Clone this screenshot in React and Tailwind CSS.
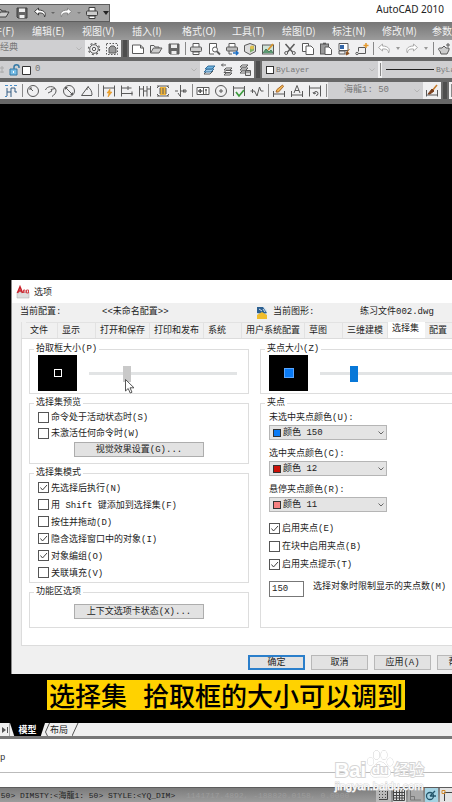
import React, { useState } from 'react';
import clsx from 'clsx';

const MENUS = ['文件(F)', '编辑(E)', '视图(V)', '插入(I)', '格式(O)', '工具(T)', '绘图(D)', '标注(N)', '修改(M)', '参数(P)'];

const TABS = [
  { label: '文件', width: 'w-8' },
  { label: '显示', width: 'w-[38px]' },
  { label: '打开和保存', width: 'w-[54px]' },
  { label: '打印和发布', width: 'w-[54px]' },
  { label: '系统', width: 'w-[38px]' },
  { label: '用户系统配置', width: 'w-[63px]' },
  { label: '草图', width: 'w-[38px]' },
  { label: '三维建模', width: 'w-[45px]' },
  { label: '选择集', width: 'w-[37px]' },
  { label: '配置', width: 'w-[38px]' },
];

const SELECTION_MODES = [
  { label: '先选择后执行(N)', checked: true },
  { label: '用 Shift 键添加到选择集(F)', checked: false },
  { label: '按住并拖动(D)', checked: false },
  { label: '隐含选择窗口中的对象(I)', checked: true },
  { label: '对象编组(O)', checked: true },
  { label: '关联填充(V)', checked: false },
];

const GRIP_COLORS = [
  { id: 'grip-unselected', label: '未选中夹点颜色(U):', value: '颜色 150', swatch: 'bg-[#0a7bf5]' },
  { id: 'grip-selected', label: '选中夹点颜色(C):', value: '颜色 12', swatch: 'bg-[#cc1108]' },
  { id: 'grip-hover', label: '悬停夹点颜色(R):', value: '颜色 11', swatch: 'bg-[#f58080]' },
];

// Toolbar glyphs, all on a 14x14 grid
const GLYPHS = {
  open: <><path d="M1.5 11V3.5h3.5l1 1.5h4V6" /><path d="M1.5 11 4.5 6h8.5l-3 5z" fill="#ccc" /></>,
  save: <><path d="M2 2h10v10H3l-1-1z" fill="#666" /><path d="M4 2.5h6V6H4zM4.5 9h5v3h-5z" fill="#eee" stroke="none" /></>,
  undo: <path d="M5.500 2 1.500 5.500l4 3.500V7c4-.3 6 .8 6 4 2-3 .5-7-6-7z" fill="#fff" />,
  redo: <path d="m8.500 2 4 3.500-4 3.500V7c-4-.3-6 .8-6 4-2-3-.5-7 6-7z" fill="#fff" />,
  print: <><path d="M4 5V1.500h6V5M4 9v3.500h6V9" fill="#fff" /><rect x="1.500" y="5" width="11" height="4.500" rx="1" fill="#ccc" /><path d="M4 10h6" /></>,
  gear: <><circle cx="7" cy="7" r="4.300" strokeWidth="1" /><circle cx="7" cy="7" r="1.700" /><circle cx="7" cy="7" r="5.600" strokeDasharray="2 2.400" strokeWidth="1.200" /></>,
  frame: <><rect x="1.500" y="1.500" width="11" height="11" strokeDasharray="1.500 1.500" /><path d="M4 11V6l2-2h3l2 2v5z" fill="#9a9a9a" /></>,
  page: <path d="M1.500 3h8L12.500 6v5.500h-11zM9.500 3v3h3" fill="#fff" />,
  preview: <><path d="M7 12H2.500V1.500h7V5" fill="#fff" /><circle cx="8" cy="7.500" r="2.500" /><path d="m10 9.500 3 3" strokeWidth="1.800" /></>,
  plot: <><path d="M4 5V1.500h6V5" fill="#fff" /><rect x="1.500" y="5" width="11" height="4" rx="1" fill="#bbb" /><path d="M4 9v3h3" /><path d="M8 11h5M11 9l2 2-2 2" stroke="#1d6fc4" strokeWidth="1.500" /></>,
  cube: <><path d="m7 1.500 5.500 2v6L7 12.500 1.500 9.500v-6z" fill="#ddd" /><path d="m7 5 4-1.500v5L7 10.500z" fill="#7fb069" stroke="none" /><circle cx="9" cy="5.500" r="2" fill="#e3c04d" stroke="none" /></>,
  picture: <><rect x="1.500" y="3" width="11" height="9" fill="#cfe3d8" /><path d="m2 11 3-4 3 3 2-2 2 3" fill="#5b9a72" stroke="#4a7d5d" /><path d="m7 8 5-6" stroke="#d8952c" strokeWidth="1.800" /></>,
  cut: <><path d="m2.500 2 7 8M11.500 2l-7 8" strokeWidth="1.500" /><circle cx="3.200" cy="11" r="1.500" /><circle cx="10.800" cy="11" r="1.500" /></>,
  copy: <><path d="M1.500 1.500h6v8h-6z" fill="#fff" /><path d="M5 4h5l2.500 2.500v6H5z" fill="#fff" /></>,
  paste: <><rect x="1.500" y="2" width="8" height="10" fill="#999" /><path d="M4 1.500h3" strokeWidth="1.600" /><path d="M6 5h4l2.500 2.500v5H6z" fill="#fff" /></>,
  match: <><path d="M2 1.500h9v7H2z" fill="#fff" /><path d="M3 3h4v4H3z" fill="#3567a8" stroke="none" /><path d="M2 9h6v3H2z" /><path d="m12.500 7-3 4" stroke="#c27a2a" /><path d="m10 9.500 2 2-3 1.500z" fill="#8b4f1d" stroke="#8b4f1d" /></>,
  block: <><path d="M3.500 5.500h7v6h-9M3.500 5.500v4" /><circle cx="2" cy="11.500" r="1.200" fill="#fff" /><path d="M11 1v5M8.500 3.500h5" stroke="#e5982b" strokeWidth="1.500" /></>,
  pan: <><path d="M3 6c-2 0-2 2 0 3l1 3h6l2-4V6H9L7 4 5 6z" fill="#ccc" /><path d="M11 1v4M9 3h4" /></>,
  layers: <><path d="m2 11 3-3h6l-3 3z" fill="#fff" /><path d="m2 9 3-3h7L9 9z" fill="#9ecae8" stroke="#356f9c" /><path d="m3 6 3-3h7l-3 3z" fill="#6fb4df" stroke="#356f9c" /></>,
  layerPrev: <><path d="m4 12 2-2h6l-2 2zM4 9.500l2-2h6l-2 2zM4 7l2-2h6l-2 2z" fill="#fff" /><path d="M6 2H1.500M3 .5 1.500 2 3 3.500" /></>,
  layerState: <><path d="m2 10 2-2h6l-2 2zM2 7l2-2h6l-2 2zM2 4l2-2h6L8 4z" fill="#fff" /><path d="M7.500 7.500h5v5h-5z" fill="#ddd" /><path d="M7.500 9h5" /></>,
  quickDim: <><path d="M3 4v8M3 8h4V4h4v4h2M7 8v5" stroke="#355d82" /><path d="M1 1.500h3M6 1.500h2M10 1.500h3M1 12.500h2" stroke="#4b8fc9" /></>,
  radius: <><circle cx="7" cy="7" r="5.500" /><path d="m7 7-3-3M4 6V4h2" /></>,
  jogged: <path d="M1.500 6c1-4 9-5 10.500 0 .5 3-2 5-4 6.500M4 9l4-2-1-1.500 4-1" />,
  diameter: <><circle cx="7" cy="7" r="5.500" /><path d="m3 3 8 8M3.500 5.500v-2h2M10.500 8.500v2h-2" /></>,
  angle: <path d="M12 11.500H1.500L8.500 2M8 3c3 2 4 5 4 8M6 5l2 0" />,
  quick: <><path d="M1.500 1.500v11M12.500 1.500v11M1.500 4h11" /><path d="M8 5 5 9h2l-1 4 4-5H8z" fill="#f1a62b" stroke="#e08b12" strokeWidth=".5" /></>,
  baseline: <path d="M1.500 1.500v11M1.500 4h10M8 2v4M1.500 9.500h11M12 7.500v4" />,
  continued: <path d="M1.500 2v10.500M5.500 2v10.500M9 2v10.500M12.500 2v10.500M1.500 5h4M9 5h3.500M5.500 7H9" />,
  space: <><path d="M4 3h6v8H4z" fill="#f1b53a" stroke="none" /><path d="M1 2h12M1 12h12M4 4v6M7 4v6M10 4v6M1 4l2-2M13 4l-2-2M1 10l2 2M13 10l-2 2" /></>,
  breakDim: <path d="M1 7h3M6 7h7M6.500 1v12M9.500 5.500v3M11 5v4M4 9l2 3" />,
  tolerance: <><path d="M1 3.500h12v7H1zM7.500 3.500v7" fill="#fff" /><path d="M2 7h4.500M4.200 5v4M10 5v2.500M10 8.500v1" strokeWidth="1.600" /></>,
  center: <><circle cx="7" cy="7" r="5.500" /><path d="M7 5v4M5 7h4" /></>,
  inspect: <><path d="M1.500 2v10M12.500 2v10M1.500 4h11" /><path d="m4 8 3 4 5-6" stroke="#3d9c3d" strokeWidth="1.700" /></>,
  jogLine: <path d="M.5 7h4l2.500 5L9.500 3l1.500 4h2.500M2.500 5v4" />,
  dimEdit: <><path d="M1.500 7v6M12.500 7v6M1.500 10h11" /><path d="m4 8 1-2.500L10.500 1l1 1.500L6.500 8z" fill="#f3b956" stroke="#a8672a" /></>,
  textEdit: <path d="M1.500 7v6M12.500 7v6M1.500 11h11M4 9l3-7.500L10 9M5 6.500h4" />,
  update: <><path d="M1.500 1.500v11M12.500 1.500v11M1.500 4h11" /><path d="M6 9.500a2 2 0 1 1 2 2M5 8l1 2 2-1" /></>,
  styleBrush: <><path d="M1.500 6v6.500M12.500 6v6.500M1.500 11h11" /><path d="m12 1-5 6" stroke="#c4792a" strokeWidth="1.500" /><path d="m7 5 2 2-4 3H3z" fill="#7b3f1c" stroke="#7b3f1c" /></>,
};

function Glyph({ name, className }) {
  return (
    <svg viewBox="0 0 14 14" className={clsx('size-3.5 shrink-0', className)} fill="none" stroke="currentColor" strokeWidth="1" aria-hidden="true">
      {GLYPHS[name]}
    </svg>
  );
}

function Tool({ name, faded }) {
  return (
    <button type="button" aria-label={name} className={clsx('flex w-[18px] shrink-0 items-center justify-center', faded ? 'text-[#aaaaaa]' : 'text-[#5a5a5a]')}>
      <Glyph name={name} />
    </button>
  );
}

const Tools = ({ names }) => names.map((n) => <Tool key={n} name={n} />);
const Sep = () => <span className="my-0.5 ml-0.5 w-0.5 shrink-0 border-l border-[#888888]" />;
const Grip = () => <span className="w-2 shrink-0 border-x-2 border-[#6c6c6c] bg-[#4e4e4e]" />;
const Caret = () => (
  <span className="flex w-2.5 shrink-0 items-center justify-center">
    <span className="border-x-2 border-t-3 border-x-transparent border-t-[#999999]" />
  </span>
);

function Chevron({ className }) {
  return (
    <svg viewBox="0 0 8 6" className={clsx('h-1.5 w-2', className)} fill="none" stroke="currentColor" aria-hidden="true">
      <path d="m1.500 1.500 2.500 2.500 2.500-2.500" />
    </svg>
  );
}

function Combo({ label, value, className, selectClass, children }) {
  return (
    <div className={clsx('relative flex items-center bg-[#cfcfd1] text-[#777777]', className)}>
      {children}
      <select aria-label={label} className={clsx('h-full min-w-0 flex-1 appearance-none bg-transparent pt-px', selectClass)}>
        <option>{value}</option>
      </select>
      <Chevron className="pointer-events-none absolute right-0.5 text-[#b4b4b4]" />
    </div>
  );
}

function Toolbars() {
  return (
    <div className="flex flex-col gap-1 bg-[#676767] pb-[5px] font-['Liberation_Mono','Noto_Sans_CJK_SC',monospace]">
      <div className="flex h-[17px] bg-[#f0f0f1]">
        <Combo label="工作空间" value="经典" className="w-[85px] shrink-0" selectClass="text-[9px]" />
        <Tools names={['gear', 'frame']} />
        <Grip />
        <Tools names={['page', 'open', 'save']} />
        <Sep />
        <Tools names={['print', 'preview', 'plot', 'cube', 'picture']} />
        <Sep />
        <Tools names={['cut', 'copy', 'paste', 'match', 'block']} />
        <Sep />
        <Tool name="undo" faded />
        <Caret />
        <Tool name="redo" faded />
        <Caret />
        <Sep />
        <Tool name="pan" />
      </div>
      <div className="flex h-[17px] bg-[#f0f0f1]">
        <Combo label="图层" value="0" className="w-[200px] shrink-0" selectClass="pl-1 text-[9px]">
          <svg viewBox="0 0 31 14" className="h-3.5 w-[31px] shrink-0" fill="none" aria-hidden="true">
            <path d="M0 5h4M2 3v7M0 9h4" stroke="#aaaaaa" />
            <path d="M10 6h7v6h-7z" fill="#78bde6" stroke="#3579a5" />
            <path d="M14 6V4c0-3 5-3 5 0v1" stroke="#3579a5" strokeWidth="1.500" />
            <path d="M13.500 8v2" stroke="#fff" />
            <path d="M22.500 3.500h8v8h-8z" fill="#fff" stroke="#333333" />
          </svg>
        </Combo>
        <Tools names={['layers', 'layerPrev', 'layerState']} />
        <Grip />
        <Combo label="颜色控制" value="ByLayer" className="w-[116px] shrink-0" selectClass="pl-0.5 text-[8px]">
          <span className="ml-1 size-2 border border-[#333333] bg-white" />
        </Combo>
        <Sep />
        <Combo label="线型控制" value="ByLayer" className="min-w-0 flex-1" selectClass="pl-0.5 text-[8px]">
          <span className="ml-1 w-12 shrink-0 border-t border-[#222222]" />
        </Combo>
      </div>
      <div className="flex h-[17px] bg-[#f0f0f1] pl-0.5">
        <Tool name="quickDim" />
        <Sep />
        <Tools names={['radius', 'jogged', 'diameter', 'angle']} />
        <Sep />
        <Tools names={['quick', 'baseline', 'continued', 'space', 'breakDim']} />
        <Sep />
        <Tools names={['tolerance', 'center', 'inspect', 'jogLine']} />
        <Sep />
        <Tools names={['dimEdit', 'textEdit', 'update']} />
        <Sep />
        <Combo label="标注样式" value="海龍1: 50" className="w-[95px] shrink-0" selectClass="pl-4 text-[9px]" />
        <Tool name="styleBrush" />
        <Grip />
        <Sep />
      </div>
    </div>
  );
}

function Group({ title, className, children }) {
  return (
    <fieldset className={clsx('flex min-w-0 flex-col border border-[#dddddd] px-2', className)}>
      <legend className="-ml-1 h-3 px-0.5 leading-3">{title}</legend>
      {children}
    </fieldset>
  );
}

function Check({ label, checked, className }) {
  const [on, setOn] = useState(Boolean(checked));
  return (
    <label className={clsx('flex items-center gap-0.5 whitespace-nowrap', className)}>
      <span className="relative flex size-[11px] shrink-0">
        <input type="checkbox" checked={on} onChange={() => setOn(!on)} className="size-[11px] appearance-none border border-[#555555] bg-white" />
        {on && (
          <svg viewBox="0 0 11 11" className="pointer-events-none absolute inset-0 size-[11px]" fill="none" stroke="#444444" aria-hidden="true">
            <path d="m2.500 5.500 2 2.500 4.500-5" />
          </svg>
        )}
      </span>
      <span className="pt-0.5 leading-3">{label}</span>
    </label>
  );
}

function SizeSlider({ label, value, className, preview }) {
  return (
    <div className="flex items-center gap-3 pb-0.5">
      <div className="flex h-9 w-[39px] shrink-0 items-center justify-center bg-black">{preview}</div>
      <input
        type="range"
        aria-label={label}
        defaultValue={value}
        className={clsx(
          'h-4 min-w-0 flex-1 appearance-none bg-transparent',
          '[&::-webkit-slider-runnable-track]:h-[3px] [&::-webkit-slider-runnable-track]:bg-[#e2e4e5]',
          '[&::-webkit-slider-thumb]:-mt-1.5 [&::-webkit-slider-thumb]:h-4 [&::-webkit-slider-thumb]:w-2 [&::-webkit-slider-thumb]:appearance-none',
          className
        )}
      />
    </div>
  );
}

function ColorField({ id, label, value, swatch }) {
  return (
    <div className="flex flex-col gap-px">
      <label htmlFor={id} className="h-3 leading-3">{label}</label>
      <div className="relative flex h-[15px] w-[118px] items-center">
        <select id={id} className="h-full w-full appearance-none border border-[#b5b5b5] bg-[#e4e4e4] pl-[13px] pt-px leading-3">
          <option>{value}</option>
        </select>
        <span className={clsx('pointer-events-none absolute left-1 size-2 border border-[#333333]', swatch)} />
        <Chevron className="pointer-events-none absolute right-0.5 text-[#666666]" />
      </div>
    </div>
  );
}

function PushButton({ children, className }) {
  return (
    <button type="button" className={clsx('h-[15px] shrink-0 border bg-[#e2e2e2] leading-3', className)}>
      {children}
    </button>
  );
}

function OptionsDialog() {
  const [tab, setTab] = useState('选择集');

  return (
    <section className="ml-[11px] mt-[176px] border-l border-[#8a8a8a] bg-[#f0f0f0] pb-1 font-['Liberation_Mono','Noto_Sans_CJK_SC',monospace] text-[9px] text-[#1c1c1c]">
      <header className="flex h-[23px] items-center gap-1 bg-white pl-1">
        <svg viewBox="0 0 14 14" className="size-3.5" aria-hidden="true">
          <path d="M1 7h12v6H1z" fill="#dedede" stroke="#aaaaaa" strokeWidth=".5" />
          <path d="M1.500 8 4 2l2.500 6M2.500 6h3" fill="none" stroke="#c8232c" strokeWidth="1.700" />
          <path d="M7.500 8V5h1.500v3M10.500 5h2v3h-2z" fill="none" stroke="#d4434a" strokeWidth="1" />
        </svg>
        <h1 className="font-['Noto_Sans_CJK_SC',sans-serif] text-[9px]">选项</h1>
      </header>

      <div className="flex h-[19px] items-center overflow-hidden whitespace-nowrap pl-2">
        <span className="w-[82px] shrink-0">当前配置:</span>
        <span className="w-[154px] shrink-0">&lt;&lt;未命名配置&gt;&gt;</span>
        <svg viewBox="0 0 12 14" className="mr-[5px] h-3.5 w-3 shrink-0" aria-hidden="true">
          <path d="M1 1h7l3 3v9H1z" fill="#d9e6ef" />
          <path d="M1 1h6l4 6-4 1-6-1z" fill="#2b5f91" />
          <path d="m1 9 5-3 5 3v4H1z" fill="#f0bd2c" />
          <path d="m3 3 3 2M7 3l2 3" stroke="#fff" strokeWidth=".8" />
        </svg>
        <span className="w-[87px] shrink-0">当前图形:</span>
        <span>练习文件002.dwg</span>
      </div>

      <nav role="tablist" className="ml-[9px] flex h-4 items-stretch overflow-hidden border-l border-[#e0e0e0] pl-1">
        {TABS.map((t) => (
          <button
            key={t.label}
            type="button"
            role="tab"
            aria-selected={tab === t.label}
            onClick={() => setTab(t.label)}
            className={clsx(
              'shrink-0 whitespace-nowrap pl-1 text-left leading-3',
              t.width,
              tab === t.label ? 'bg-white pb-0.5' : 'border-r border-t border-[#e2e2e2]'
            )}
          >
            {t.label}
          </button>
        ))}
      </nav>

      <div className="ml-[9px] grid grid-cols-[220px_1fr] gap-x-[11px] border-y border-l border-[#dcdcdc] bg-white pb-[17px] pl-[7px] pt-1">
        <div className="flex flex-col gap-[3px]">
          <Group title="拾取框大小(P)">
            <div className="relative">
              <SizeSlider
                label="拾取框大小"
                value={24}
                className="mr-[3px] [&::-webkit-slider-thumb]:bg-[#c9c9c9]"
                preview={<span className="size-2 border border-white" />}
              />
              <svg viewBox="0 0 10 15" className="pointer-events-none absolute left-[87px] top-6 h-[15px] w-2.5" aria-hidden="true">
                <path d="M.5.500v11.500l2.700-2.500 2 4.500 1.800-.8-2-4.400h4z" fill="#fff" stroke="#444444" strokeWidth=".9" />
              </svg>
            </div>
          </Group>
          <Group title="选择集预览" className="pb-1.5">
            <Check label="命令处于活动状态时(S)" className="h-4" />
            <Check label="未激活任何命令时(W)" className="h-4" />
            <PushButton className="mx-9 mt-px border-[#adadad]">视觉效果设置(G)...</PushButton>
          </Group>
          <Group title="选择集模式" className="pb-px">
            {SELECTION_MODES.map((m) => (
              <Check key={m.label} label={m.label} checked={m.checked} className="h-[17px]" />
            ))}
          </Group>
          <Group title="功能区选项" className="pb-2">
            <PushButton className="mx-9 mt-1.5 border-[#adadad]">上下文选项卡状态(X)...</PushButton>
          </Group>
        </div>

        <div className="flex min-w-0 flex-col gap-[3px]">
          <Group title="夹点大小(Z)" className="border-r-0 pr-0">
            <SizeSlider
              label="夹点大小"
              value={24}
              className="[&::-webkit-slider-thumb]:bg-[#0878d8]"
              preview={<span className="size-2.5 border border-[#5aa6ff] bg-[#0a7bf5]" />}
            />
          </Group>
          <Group title="夹点" className="flex-1 border-r-0 pr-0">
            <div className="flex flex-col gap-2 pt-[3px]">
              {GRIP_COLORS.map((c) => (
                <ColorField key={c.id} {...c} />
              ))}
            </div>
            <div className="mt-[7px] flex flex-col">
              <Check label="启用夹点(E)" checked className="h-[18px]" />
              <Check label="在块中启用夹点(B)" className="h-[18px]" />
              <Check label="启用夹点提示(T)" checked className="h-[18px]" />
            </div>
            <div className="mt-2 flex items-start gap-[9px]">
              <input id="grip-limit" defaultValue="150" className="h-4 w-[35px] shrink-0 border border-[#777777] bg-white px-0.5" />
              <label htmlFor="grip-limit" className="whitespace-nowrap leading-3">选择对象时限制显示的夹点数(M)</label>
            </div>
          </Group>
        </div>
      </div>

      <footer className="mt-[9px] flex gap-1.5 overflow-hidden pl-[236px]">
        <PushButton className="w-[57px] border-[#2b7fcb] ring-1 ring-inset ring-[#2b7fcb]">确定</PushButton>
        <PushButton className="w-[57px] border-[#b8b8b8]">取消</PushButton>
        <PushButton className="w-[57px] border-[#b8b8b8]">应用(A)</PushButton>
        <PushButton className="w-[57px] border-[#b8b8b8]">帮助(H)</PushButton>
      </footer>
    </section>
  );
}

function StatusBar() {
  return (
    <footer className="flex h-[15px] items-center overflow-hidden border-t border-[#5c5c5c] bg-linear-to-b from-[#7c7c7c] to-[#9c9c9c] font-['Liberation_Mono','Noto_Sans_CJK_SC',monospace] text-[8px] text-[#1f1f1f]">
      <span className="-ml-1 w-[190px] shrink-0 whitespace-nowrap pt-0.5">:50&gt; DIMSTY:&lt;海龍1: 50&gt; STYLE:&lt;YQ_DIM&gt;</span>
      <span className="min-w-0 flex-1 whitespace-nowrap pt-0.5 text-[#9c9c9c]">1141717.4892, -188820.0158, 0.0000</span>
      <div className="flex w-[76px] shrink-0 gap-0.5 text-[#444444]">
        <button type="button" aria-label="捕捉" className="flex h-3.5 w-4 items-center justify-center bg-[#b9b9b9]">
          <svg viewBox="0 0 12 12" className="size-3" fill="none" stroke="currentColor"><path d="M2 2.500h8M2 5.500h8M2 8.500h8" strokeDasharray="1 2" /><path d="M10.500 2v8.500H2" /></svg>
        </button>
        <button type="button" aria-label="栅格" className="flex h-3.5 w-3.5 items-center justify-center bg-[#dedede]">
          <svg viewBox="0 0 12 12" className="size-3" fill="none" stroke="currentColor"><path d="M.5.500h11v11H.5zM3.500 0v12M6.500 0v12M9 0v12M0 3.500h12M0 6.500h12M0 9h12" /></svg>
        </button>
        <button type="button" aria-label="正交" className="flex h-3.5 w-4 items-center justify-center bg-[#a9a9a9] text-[#777777]">
          <svg viewBox="0 0 12 12" className="size-3" fill="none" stroke="currentColor"><path d="M1.500 1v10H12M1.500 7.500h4V11" /></svg>
        </button>
        <button type="button" aria-label="极轴" className="flex h-3.5 w-3.5 items-center justify-center bg-[#a5d3e3]">
          <svg viewBox="0 0 12 12" className="size-3" fill="none" stroke="#24566b" strokeWidth="1.300"><circle cx="5" cy="7" r="3.500" /><path d="M5 7h6M5 7l5-5" /></svg>
        </button>
        <button type="button" aria-label="对象捕捉" className="flex h-3.5 w-3 items-center bg-[#e4e4e4]">
          <svg viewBox="0 0 12 12" className="size-3" fill="none" stroke="currentColor"><path d="M4.500 12V3.500H12" /><path d="M2 1.500h3v3H2z" stroke="#d38b2d" /></svg>
        </button>
      </div>
    </footer>
  );
}

function Watermark() {
  return (
    <div className="pointer-events-none absolute bottom-2.5 right-7 flex flex-col font-['Liberation_Sans','Noto_Sans_CJK_SC',sans-serif] text-white">
      <div className="flex h-8 items-end leading-5 [-webkit-text-stroke:2px_#d6d6d6] [paint-order:stroke_fill]">
        <span className="text-[20px] font-bold">Bai</span>
        <span className="relative flex h-8 w-7 items-end justify-center">
          <svg viewBox="0 0 28 28" className="absolute inset-x-0 top-0.5 size-7" fill="#fff" stroke="#d2d2d2" aria-hidden="true">
            <ellipse cx="4.500" cy="11.500" rx="3" ry="4" />
            <ellipse cx="10.500" cy="5" rx="3" ry="4.300" />
            <ellipse cx="18" cy="5" rx="3" ry="4.300" />
            <ellipse cx="24" cy="12" rx="3" ry="4" />
            <path d="M14 12c-4 0-5 4-8 7-3 4-1 8 3 8 3 0 7-.5 11 0 4 0 6-4 3-8-3-3-4-7-9-7z" />
          </svg>
          <span className="relative text-[13px] font-bold leading-5">du</span>
        </span>
        <span className="text-[15px]">经验</span>
      </div>
      <span className="text-[11px] leading-3 [-webkit-text-stroke:1px_#d6d6d6] [paint-order:stroke_fill]">jingyan.baidu.com</span>
    </div>
  );
}

export default function App() {
  return (
    <div className="relative flex min-h-screen flex-col overflow-hidden bg-white font-['Noto_Sans','Noto_Sans_CJK_SC',sans-serif]">
      <div className="flex h-[22px] items-start justify-between bg-white">
        <div className="mt-1 flex h-[18px] w-[110px] items-center border-y border-r border-[#5d5d5d] bg-[#a4a4a4] text-[#3f3f3f]">
          <Glyph name="open" className="-ml-1" />
          <Glyph name="save" className="ml-[5px]" />
          <Glyph name="undo" className="ml-1" />
          <span className="ml-1 border-x-2 border-t-2 border-x-transparent border-t-[#666666]" />
          <Glyph name="redo" className="ml-1 text-[#888888]" />
          <span className="ml-1 border-x-2 border-t-2 border-x-transparent border-t-[#777777]" />
          <Glyph name="print" className="ml-1" />
          <span className="ml-1 border-x-3 border-t-4 border-x-transparent border-t-[#222222]" />
        </div>
        <span className="mr-2 mt-px text-[10px] leading-4 text-[#222222]">AutoCAD 2010</span>
      </div>

      <nav className="h-[18px] overflow-hidden bg-linear-to-b from-[#777777] to-[#9b9b9b]">
        <div className="-ml-[18px] flex font-['Noto_Sans_CJK_SC',sans-serif] text-[10px] leading-[18px] text-[#f2f2f2]">
          {MENUS.map((m) => (
            <button key={m} type="button" className="w-[50px] shrink-0 whitespace-nowrap text-left">
              {m}
            </button>
          ))}
        </div>
      </nav>

      <Toolbars />

      <main className="flex flex-1 flex-col bg-black">
        <OptionsDialog />
        <div className="mt-1.5 flex justify-center">
          <p className="flex h-[30px] items-center gap-4 whitespace-nowrap bg-[#ffd200] px-0.5 font-['Noto_Sans_CJK_SC',sans-serif] text-[26px] font-medium leading-[30px] text-black">
            <span>选择集</span>
            <span>拾取框的大小可以调到</span>
          </p>
        </div>
      </main>

      <div className="flex h-[13px] bg-[#f0f0f0] font-['Noto_Sans_CJK_SC',sans-serif] text-[9px] leading-[13px] text-[#222222]">
        <button type="button" aria-label="最后一个" className="flex w-2.5 items-center justify-center border-r border-[#aaaaaa]">
          <svg viewBox="0 0 8 8" className="size-2" fill="#555555"><path d="m1 1 4 3-4 3zM6 1h1v6H6z" /></svg>
        </button>
        <button type="button" className="w-[35px] bg-black text-center font-bold text-white [clip-path:polygon(0_0,100%_0,88%_100%,12%_100%)]">模型</button>
        <button type="button" className="flex items-center">
          <svg viewBox="0 0 5 13" className="h-[13px] w-[5px]" stroke="#555555" fill="none"><path d="M4.500 0 .5 9l2 4" /></svg>
          布局
          <svg viewBox="0 0 10 13" className="ml-1 h-[13px] w-2.5" stroke="#555555" fill="none"><path d="M6 0 0 13" /></svg>
        </button>
      </div>

      <div className="border-t-3 border-[#777777] bg-white">
        <p className="h-[33px] pt-2.5 font-['Liberation_Mono',monospace] text-[9px] leading-[18px] text-[#333333]">p</p>
        <input aria-label="命令" className="block h-[15px] w-full border-t border-[#bbbbbb] bg-white px-1 text-[9px]" />
      </div>
      <StatusBar />
      <Watermark />
    </div>
  );
}
